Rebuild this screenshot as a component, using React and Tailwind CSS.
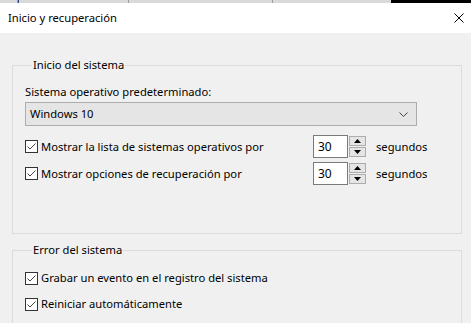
import React from "react";

const CheckBox = () => (
  <span className="w-[13px] h-[13px] border border-[#333333] bg-white flex items-center justify-center shrink-0">
    <svg width="11" height="11" viewBox="0 0 11 11">
      <path d="M1.5 5.5 L4 8 L9.5 2.5" fill="none" stroke="#444444" strokeWidth="1" />
    </svg>
  </span>
);

const CheckRow = ({ label, className = "" }) => (
  <div className={`flex items-center gap-[3px] h-4 ${className}`}>
    <CheckBox />
    <span>{label}</span>
  </div>
);

const Spinner = ({ value }) => (
  <div className="flex items-center h-[23px] shrink-0">
    <div className="w-[35px] h-[23px] border border-[#7a7a7a] bg-white pl-[4px] flex items-center text-[12px]">{value}</div>
    <div className="flex flex-col gap-[1px] pl-[1px] w-[18px]">
      <div className="h-[10px] border border-[#acacac] bg-[#e5e5e5] flex items-center justify-center">
        <svg width="7" height="4" viewBox="0 0 7 4"><path d="M0 4 L3.5 0 L7 4 Z" fill="#000" /></svg>
      </div>
      <div className="h-[10px] border border-[#acacac] bg-[#e5e5e5] flex items-center justify-center">
        <svg width="7" height="4" viewBox="0 0 7 4"><path d="M0 0 L3.5 4 L7 0 Z" fill="#000" /></svg>
      </div>
    </div>
  </div>
);

const SpinRow = ({ label, value }) => (
  <div className="flex items-center h-[23px] whitespace-nowrap">
    <div className="flex items-center gap-[3px] w-[288px] shrink-0">
      <CheckBox />
      <span>{label}</span>
    </div>
    <Spinner value={value} />
    <span className="ml-[10px]">segundos</span>
  </div>
);

export default function App() {
  return (
    <div className="w-[471px] h-[323px] overflow-hidden bg-[#f0f0f0] text-[11.2px] leading-4 text-black font-['Noto_Sans',sans-serif]">
      {/* tabs of the window behind */}
      <div className="h-[3px] flex overflow-hidden bg-[#dadada]">
        <div className="w-[129px] border-r border-[#a0a0a0] pl-[8px] -mt-[12px] whitespace-nowrap">Opciones avanzadas</div>
        <div className="w-[144px] border-r border-[#a0a0a0] pl-[18px] -mt-[12px] whitespace-nowrap">Protección del sistema</div>
        <div className="w-[118px] pl-[20px] -mt-[12px] whitespace-nowrap">Acceso remoto</div>
        <div className="flex-1 bg-black" />
      </div>

      {/* title bar */}
      <div className="h-[30px] bg-white flex items-center justify-between pl-[8px] pr-[7px]">
        <span>Inicio y recuperación</span>
        <svg width="10" height="10" viewBox="0 0 10 10">
          <path d="M0.5 0.5 L9.5 9.5 M9.5 0.5 L0.5 9.5" stroke="#000" strokeWidth="1" />
        </svg>
      </div>

      <div className="pl-[12px] pr-[9px] pt-[24px]">
        <fieldset className="min-w-0 border border-[#dcdcdc] pl-[12px] pr-[44px] pb-[48px]">
          <legend className="ml-[7px] px-[1px] leading-4">Inicio del sistema</legend>
          <div className="mt-[11px]">Sistema operativo predeterminado:</div>
          <div className="mt-[2px] h-[24px] border border-[#adadad] bg-[#e5e5e5] flex items-center justify-between pl-[4px] pr-[8px]">
            <span>Windows 10</span>
            <svg width="9" height="5" viewBox="0 0 9 5">
              <path d="M0.5 0.5 L4.5 4.5 L8.5 0.5" fill="none" stroke="#444" strokeWidth="1" />
            </svg>
          </div>
          <div className="mt-[9px] flex flex-col gap-[4px]">
            <SpinRow label="Mostrar la lista de sistemas operativos por" value="30" />
            <SpinRow label="Mostrar opciones de recuperación por" value="30" />
          </div>
        </fieldset>

        <fieldset className="min-w-0 mt-[8px] border border-[#dcdcdc] pl-[12px] pb-[20px]">
          <legend className="ml-[7px] px-[1px] leading-4">Error del sistema</legend>
          <CheckRow className="mt-[12px]" label="Grabar un evento en el registro del sistema" />
          <CheckRow className="mt-[10px]" label="Reiniciar automáticamente" />
        </fieldset>
      </div>
    </div>
  );
}
